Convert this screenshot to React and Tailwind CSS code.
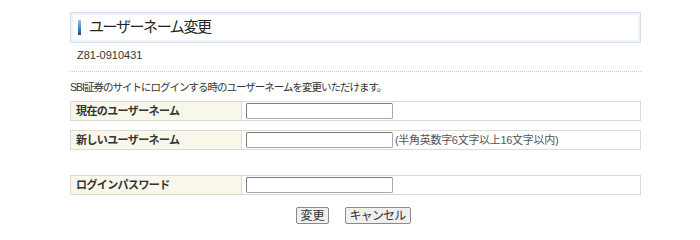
import React from 'react';

const font = { fontFamily: '"Liberation Sans", Arial, "Noto Sans CJK JP", sans-serif' };

const Row = ({ label, note, className = '' }) => (
  <div className={`flex h-[20px] border border-[#dcdcd2] ${className}`}>
    <div className="w-[171px] bg-[#f8f7ea] border-r border-[#dcdcd2] flex items-center pl-[5px] text-[11px] font-bold text-[#333] tracking-[-0.6px]">
      {label}
    </div>
    <div className="flex-1 flex items-center pl-[4px] gap-[2px]">
      <input
        type="text"
        className="w-[147px] h-[16px] bg-white border border-[#a9a9a9] border-t-[#7a7a7a] border-l-[#7a7a7a] rounded-[2px] outline-none"
      />
      {note && <span className="text-[11px] text-[#555] tracking-[-0.3px]">{note}</span>}
    </div>
  </div>
);

const App = () => {
  return (
    <div className="w-[700px] h-[238px] bg-white text-[#333] pt-[12px] pl-[70px]" style={font}>
      <div className="w-[571px]">
        <div className="h-[31px] border border-[#d4deed] shadow-[inset_0_0_0_2px_#eef3fa] flex items-center pl-[7px]">
          <span className="w-[3px] h-[15px] bg-gradient-to-b from-[#8fc3ee] to-[#0d4f8f]" />
          <span className="ml-[8px] text-[15px] text-[#222] tracking-[-1.4px]">ユーザーネーム変更</span>
        </div>
        <div className="pl-[7px] pt-[5px] text-[11px] leading-[14px] text-[#333]">Z81-0910431</div>
        <div className="mt-[9px] border-t border-dotted border-[#c8c8c8]" />
        <div className="mt-[8px] text-[10.5px] leading-[14px] tracking-[-1px]">SBI証券のサイトにログインする時のユーザーネームを変更いただけます。</div>
        <Row label="現在のユーザーネーム" className="mt-[7px]" />
        <Row label="新しいユーザーネーム" note="(半角英数字6文字以上16文字以内)" className="mt-[9px]" />
        <Row label="ログインパスワード" className="mt-[25px]" />
        <div className="flex justify-center gap-[16px] mt-[12px] pr-[4px]">
          <button className="h-[17px] px-[3px] text-[12px] leading-none bg-[#efefef] border border-[#8a8a8a] rounded-[2px]">変更</button>
          <button className="h-[17px] px-[4px] text-[12px] leading-none bg-[#efefef] border border-[#8a8a8a] rounded-[2px] tracking-[-0.8px]">キャンセル</button>
        </div>
      </div>
    </div>
  );
};

export default App;
